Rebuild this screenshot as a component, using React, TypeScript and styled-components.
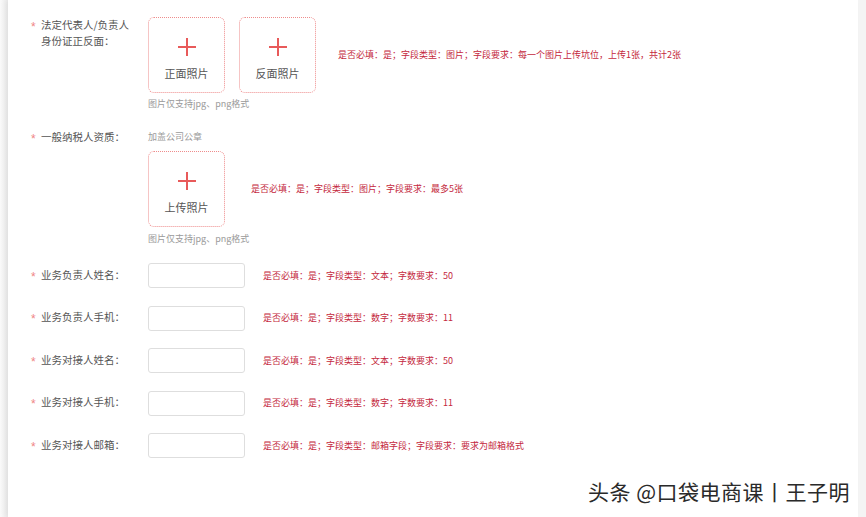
import { createGlobalStyle, styled } from 'styled-components';

const GlobalStyle = createGlobalStyle`
    * {
        box-sizing: border-box;
    }
    body {
        margin: 0;
        background: #f4f4f4;
        font-family: 'Noto Sans CJK SC', 'Noto Sans', sans-serif;
    }
`;

const Page = styled.div`
    height: 100vh;
    overflow: hidden;
    background: linear-gradient(to right, #fafafa 0px, #ececec 8px, #f4f4f4 8px);
`;

const Card = styled.div`
    position: relative;
    height: 100%;
    margin: 0 8px;
    background: #ffffff;
    padding: 17px 0 0 22px;
    box-shadow: -3px 0 5px rgba(0, 0, 0, 0.05);
`;

const Row = styled.div<{ $top: number; $center?: boolean }>`
    display: grid;
    grid-template-columns: 118px 1fr;
    align-items: ${(p) => (p.$center ? 'center' : 'start')};
    margin-top: ${(p) => p.$top}px;
`;

const Label = styled.div`
    display: flex;
    font-size: 10.5px;
    line-height: 16px;
    color: #555555;
`;

const Star = styled.span`
    flex: 0 0 11px;
    color: #ef8585;
    font-family: 'Liberation Sans', Arial, sans-serif;
    font-size: 12px;
    line-height: 16px;
    padding: 2px 0 0 1px;
`;

const Field = styled.div`
    display: flex;
    flex-direction: column;
    align-items: flex-start;
`;

const Line = styled.div`
    display: flex;
    align-items: center;
`;

const UploadGroup = styled.div`
    display: flex;
    gap: 14px;
`;

const UploadBox = styled.div`
    width: 77px;
    height: 76px;
    border: 1px dotted #ee8c8c;
    border-radius: 6px;
    display: flex;
    flex-direction: column;
    align-items: center;
    padding-top: 20px;
`;

const Caption = styled.div`
    margin-top: 10px;
    font-size: 11px;
    line-height: 14px;
    color: #555555;
`;

const Note = styled.div<{ $top: number }>`
    margin-top: ${(p) => p.$top}px;
    font-size: 9px;
    line-height: 12px;
    color: #9a9a9a;
`;

const Tip = styled.div`
    font-size: 9px;
    line-height: 16px;
    color: #9a9a9a;
    margin-bottom: 6px;
`;

const Hint = styled.div<{ $left: number }>`
    margin-left: ${(p) => p.$left}px;
    font-size: 9px;
    line-height: 12px;
    color: #c4283d;
    white-space: nowrap;
`;

const TextInput = styled.input`
    width: 97px;
    height: 25px;
    border: 1px solid #dedede;
    border-radius: 3px;
    background: #ffffff;
    outline: none;
    padding: 0 6px;
    font-size: 10px;
`;

const Watermark = styled.div`
    position: absolute;
    right: 8px;
    bottom: 11px;
    font-size: 21px;
    line-height: 30px;
    color: #2a2a2a;
    letter-spacing: 0.5px;
    text-shadow: 0 0 2px #ffffff, 1px 1px 0 #ffffff;
`;

const Plus = () => (
    <svg width="18" height="18" viewBox="0 0 18 18">
        <path d="M9 0v18M0 9h18" stroke="#e85a5a" strokeWidth="2" fill="none" />
    </svg>
);

const Upload = ({ caption }: { caption: string }) => (
    <UploadBox>
        <Plus />
        <Caption>{caption}</Caption>
    </UploadBox>
);

const textFields = [
    { label: '业务负责人姓名：', hint: '是否必填：是；字段类型：文本；字数要求：50' },
    { label: '业务负责人手机：', hint: '是否必填：是；字段类型：数字；字数要求：11' },
    { label: '业务对接人姓名：', hint: '是否必填：是；字段类型：文本；字数要求：50' },
    { label: '业务对接人手机：', hint: '是否必填：是；字段类型：数字；字数要求：11' },
    { label: '业务对接人邮箱：', hint: '是否必填：是；字段类型：邮箱字段；字段要求：要求为邮箱格式' },
];

export default function App() {
    return (
        <Page>
            <GlobalStyle />
            <Card>
                <Row $top={0}>
                    <Label>
                        <Star>*</Star>
                        <span>法定代表人/负责人<br />身份证正反面：</span>
                    </Label>
                    <Field>
                        <Line>
                            <UploadGroup>
                                <Upload caption="正面照片" />
                                <Upload caption="反面照片" />
                            </UploadGroup>
                            <Hint $left={22}>是否必填：是；字段类型：图片；字段要求：每一个图片上传坑位，上传1张，共计2张</Hint>
                        </Line>
                        <Note $top={5}>图片仅支持jpg、png格式</Note>
                    </Field>
                </Row>

                <Row $top={19}>
                    <Label>
                        <Star>*</Star>
                        <span>一般纳税人资质：</span>
                    </Label>
                    <Field>
                        <Tip>加盖公司公章</Tip>
                        <Line>
                            <Upload caption="上传照片" />
                            <Hint $left={26}>是否必填：是；字段类型：图片；字段要求：最多5张</Hint>
                        </Line>
                        <Note $top={6}>图片仅支持jpg、png格式</Note>
                    </Field>
                </Row>

                {textFields.map((f, i) => (
                    <Row key={f.label} $top={i === 0 ? 18 : 17.6} $center>
                        <Label>
                            <Star>*</Star>
                            <span>{f.label}</span>
                        </Label>
                        <Line>
                            <TextInput type="text" />
                            <Hint $left={18}>{f.hint}</Hint>
                        </Line>
                    </Row>
                ))}

                <Watermark>头条 @口袋电商课丨王子明</Watermark>
            </Card>
        </Page>
    );
}
